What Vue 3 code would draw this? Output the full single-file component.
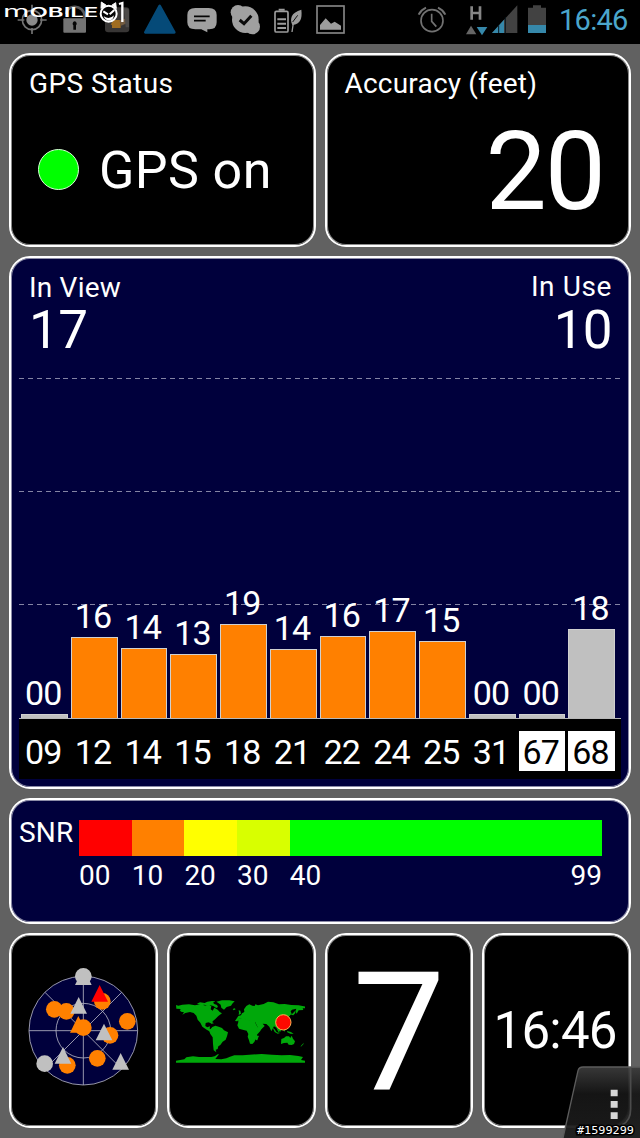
<template>
  <div class="screen">
    <!-- status bar -->
    <header class="status-bar">
      <svg class="notify" width="360" height="44" viewBox="0 0 1080 132">
        <!-- gps -->
        <g stroke="#747474" fill="none" stroke-width="5">
          <circle cx="96" cy="60" r="29" />
          <path d="M96 14v22M96 84v18M53 60h20M120 60h20" />
        </g>
        <circle cx="96" cy="60" r="17" fill="#8a8a8a" />
        <!-- unlocked -->
        <path d="M199 42c0-30 52-30 55 6v9" fill="none" stroke="#5b5b5b" stroke-width="8" />
        <rect x="190" y="55" width="68" height="43" rx="3" fill="#747474" />
        <path d="M224 64a7 7 0 0 1 4 12v13h-8V76a7 7 0 0 1 4-12z" fill="#050505" />
        <!-- app thumbnail -->
        <rect x="315" y="22" width="73" height="75" rx="10" fill="#383635" />
        <path d="M340 60h22v24h-26v-10h-4z" fill="#a06d20" />
        <path d="M358 62l22-8v16l-16 7z" fill="#725b40" />
        <path d="M372 25h10q5 2 5 9v48h-10z" fill="#4d4b49" />
        <!-- triangle -->
        <path d="M479 18L436 97H523Z" fill="#054a78" stroke="#054a78" stroke-width="8" stroke-linejoin="round" />
        <!-- message -->
        <path d="M586 24h40q24 0 24 21v22q0 21-22 21h-6v9l-18-9h-18q-24 0-24-21V45q0-21 24-21z" fill="#a0a0a0" />
        <path d="M582 49h47M582 62h35" stroke="#050505" stroke-width="5" />
        <!-- skype -->
        <circle cx="736" cy="59" r="40" fill="#a0a0a0" />
        <circle cx="714" cy="37" r="22" fill="#a0a0a0" />
        <circle cx="757" cy="80" r="23" fill="#a0a0a0" />
        <path d="M719 60l13 11 22-24" fill="none" stroke="#0a0a0a" stroke-width="9" />
        <!-- battery saver -->
        <rect x="825" y="34" width="39" height="62" rx="4" fill="none" stroke="#9c9c9c" stroke-width="5" />
        <path d="M836 29h18M832 58h26M832 71h26M832 84h26" stroke="#9c9c9c" stroke-width="6" />
        <path d="M904 29c-30 8-36 27-27 46 25-3 30-20 27-46z" fill="#9c9c9c" />
        <path d="M895 43l-14 20-5 33" fill="none" stroke="#9c9c9c" stroke-width="4" />
        <path d="M893 46l-15 20" stroke="#111" stroke-width="3" />
        <!-- picture -->
        <rect x="951" y="18" width="81" height="81" fill="none" stroke="#858585" stroke-width="5" />
        <path d="M960 89V75l17-20 16 16 11-6 19 12v12z" fill="#9c9c9c" />
        <!-- site logo -->
        <text x="9" y="51" textLength="286" lengthAdjust="spacingAndGlyphs" class="logo"><tspan font-size="48" font-weight="400">m</tspan><tspan font-size="38">OBILE</tspan></text>
        <circle cx="326" cy="41" r="24" fill="#050505" stroke="#fff" stroke-width="6" />
        <path d="M303 26L304 6l15 10M335 16l12-8 2 18" fill="#fff" stroke="#fff" stroke-width="3" />
        <path d="M310 34l14 9M343 30l-14 13" stroke="#fff" stroke-width="6" />
        <path d="M311 49q17 12 31-3q-3 16-15 16q-12-1-16-13z" fill="#fff" />
        <path d="M357 12l10-3v57" fill="none" stroke="#fff" stroke-width="7" />
      </svg>
      <svg class="system" width="146" height="44" viewBox="0 0 438 132">
        <!-- alarm -->
        <g fill="none" stroke="#727272" stroke-width="5">
          <circle cx="96" cy="62" r="33" />
          <path d="M95 41v23l14 16" />
          <path d="M56 44q7-14 22-21M114 23q15 7 22 21" stroke-width="6" />
        </g>
        <!-- network -->
        <path d="M215 19v40M240 19v40M215 39h25" stroke="#858585" stroke-width="8" />
        <path d="M213 77l16 26h-31z" fill="#656565" />
        <path d="M230 81h32l-16 25z" fill="#3688aa" />
        <path d="M352 16v83h-76z" fill="#424242" />
        <path d="M312 59v40h-36z" fill="#3688aa" />
        <path d="M296 76v23M316 52v48" stroke="#081820" stroke-width="3" />
        <!-- battery -->
        <path d="M384 23h15v-7h24v7h15v76h-54z" fill="#424242" />
        <path d="M384 75h54v24h-54z" fill="#3688aa" />
      </svg>
      <span class="clock">16:46</span>
    </header>

    <main class="board">
      <section class="card gps">
        <h2>GPS Status</h2>
        <div class="gps-state"><i class="led"></i><span>GPS on</span></div>
      </section>

      <section class="card accuracy">
        <h2>Accuracy (feet)</h2>
        <div class="feet">20</div>
      </section>

      <section class="card navy chart">
        <div class="counts">
          <div><h2>In View</h2><b>17</b></div>
          <div class="in-use"><h2>In Use</h2><b>10</b></div>
        </div>
        <div class="plot">
          <div class="grid-lines"><i></i><i></i><i></i></div>
          <div class="bars">
            <div v-for="s in satellites" :key="s.id" class="bar-col">
              <span>{{ s.snr }}</span>
              <i class="bar" :class="{ used: s.used }" :style="{ height: s.h + 'px' }"></i>
            </div>
          </div>
        </div>
        <div class="axis">
          <span v-for="s in satellites" :key="s.id" :class="{ glonass: Number(s.id) > 64 }">{{ s.id }}</span>
        </div>
      </section>

      <section class="card navy snr">
        <span class="snr-label">SNR</span>
        <div class="scale">
          <div v-for="r in ranges" :key="r.label" class="range" :class="r.name">
            <i></i>
            <span>{{ r.label }}</span>
            <span v-if="r.end" class="end">{{ r.end }}</span>
          </div>
        </div>
      </section>

      <section class="card mini">
        <svg width="112.67" height="127.33" viewBox="50 110 338 382">
          <circle cx="219" cy="301" r="163" fill="#00003c" />
          <g fill="none" stroke="#b4b4c4" stroke-width="2.5">
            <circle cx="219" cy="301" r="163" />
            <circle cx="219" cy="301" r="82" />
            <path d="M56 301h326M219 138v326M104 186l230 230M334 186L104 416" />
          </g>
          <circle v-for="(d, i) in dots" :key="i" :cx="d[0]" :cy="d[1]" r="25" :fill="d[2]" />
          <path v-for="(t, i) in triangles" :key="'t' + i" :d="`M${t[0]} ${t[1]}l25 50h-50z`" :fill="t[2]" />
          <circle cx="219" cy="292" r="25" fill="#ff8000" />
        </svg>
      </section>

      <section class="card mini world">
        <svg width="129" height="63.33" viewBox="33 60 387 190" fill="#00a80a">
          <!-- americas -->
          <path d="M33 75l7 2 12-3 20-1 18 3 16-3 17 4 9-3 7 5-2 9 6 4 5-9 10 6 6 7 7 4-11 8-9 9-8 7-2 7-7-5-12 3-1 9 6 4 8-3-1 7 7 3 3 7 9 3-3 2-13-5-12-7-13-9-6-12-8-9-4-12-8-8-11-3-14 3-9 5 5-7-9-2-4-5 4-3-14-1z" />
          <path d="M96 71l9-4 14 2 8-4 14-2 10 1-7 4 4 4 8 3 3 6-5 3-9-6-9-2-10 2-8-4-9 2z" />
          <path d="M154 65l17-4 22 0 16 3-6 6-5 7-13 4-8 8-8-6-2-9-7-5z" />
          <path d="M142 141l9-4 10 3 10 4 6 7 12 6-3 12-4 10-9 6-7 10-6 4-2 8-6 2 2 8-8-6-2-19-1-20-7-10-3-8 3-6z" />
          <path d="M127 124l12 1 8 5-7 1-9-4z" />
          <!-- europe and asia -->
          <path d="M203 87l6-2 3 3-6 3zM221 91l5 1 2 9-7 4 1-7z" />
          <path d="M220 108l8-2 3-6 7-4-1-8 7-10 9-5 9 4 7 1 2-5 8 3 17-4 13-7 16 2 17 6 17-1 20 3 22 1 26 5-1 4-13 0 2 5-14 1-6 10-4-7 3-8-13 3-4 5 3 7-7 8-7 6 1 9-6-5-6 1 4 8-4 7-9 6 2 9-7-3 2 12-4-5-5-11-7-4-8 15-6-14-9-8-11-1 6 7-10 10-6 3-8-15-4-9-12-3-7-2-4 3-10-9 4 9-10-10-9 1-6 8-7-1z" />
          <!-- africa -->
          <path d="M219 116l12-2 7-2 3 5 10 4 11-2 7 4 5 12 6 9 11-1-5 10-10 11 1 10-6 5-3 7-6 6-7-1-3-10-4-11 2-8-5-10-12-3-11-3-5-10 3-10z" />
          <path d="M279 166l2 3-4 12-5-1 2-10z" />
          <!-- pacific -->
          <path d="M323 143l6 5 6 9 10 2-7 2-9-5zM340 148l7-5 3 5-4 7-5-2zM355 150l6 0-3 5zM366 153l12 3 8 6-10-1-9-4zM377 104l5-3 8-8 1 6-6 7z" />
          <path d="M349 177l8-3 6-5 9 0 4 5 4-7 4 9 6 8-3 8-7 3-9-1-4-6-10 1-9 3z" />
          <path d="M408 197l5-5 3-4-1 5-8 8z" />
          <!-- antarctica -->
          <path d="M33 242L58 238 64 232 84 229 102 231 139 231 149 229 158 223 162 223 156 230 151 237 169 238 184 235 195 230 208 226 233 226 253 224 290 222 321 224 350 226 375 225 400 228 414 231 408 240 420 242V248H33Z" />
          <circle cx="355" cy="127" r="23" fill="#fe0800" stroke="#ffb052" stroke-width="3" />
        </svg>
      </section>

      <section class="card mini seven"><span>7</span></section>
      <section class="card mini time"><span>16:46</span></section>
    </main>

    <!-- overflow menu tab -->
    <svg class="menu-tab" width="80" height="74" viewBox="0 0 240 222">
      <defs>
        <linearGradient id="tab" x1="0" y1="0" x2="0" y2="1">
          <stop offset="0" stop-color="#3b3b3b" />
          <stop offset=".38" stop-color="#161616" />
          <stop offset="1" stop-color="#1c1c1c" />
        </linearGradient>
      </defs>
      <path d="M9 222L54 20Q57 9 69 9H244V222" fill="url(#tab)" fill-opacity=".94" stroke="#5c5c5c" stroke-width="4" />
      <path d="M212 10V135q0 35-25 47" fill="none" stroke="#4b4b4b" stroke-width="5" />
      <path d="M152 77h21v20h-21zM152 111h21v20h-21zM152 145h21v20h-21z" fill="#d6d6d6" />
      <text x="51" y="210" font-size="33" textLength="171" lengthAdjust="spacingAndGlyphs" class="stamp">#1599299</text>
    </svg>
  </div>
</template>

<script setup>
const satellites = [
  { id: '09', snr: '00', h: 4 },
  { id: '12', snr: '16', h: 81, used: true },
  { id: '14', snr: '14', h: 70, used: true },
  { id: '15', snr: '13', h: 64, used: true },
  { id: '18', snr: '19', h: 94, used: true },
  { id: '21', snr: '14', h: 69, used: true },
  { id: '22', snr: '16', h: 82, used: true },
  { id: '24', snr: '17', h: 87, used: true },
  { id: '25', snr: '15', h: 77, used: true },
  { id: '31', snr: '00', h: 4 },
  { id: '67', snr: '00', h: 4 },
  { id: '68', snr: '18', h: 89 }
]

const ranges = [
  { name: 'red', label: '00' },
  { name: 'orange', label: '10' },
  { name: 'yellow', label: '20' },
  { name: 'lime', label: '30' },
  { name: 'green', label: '40', end: '99' }
]

const orange = '#ff8000'
const grey = '#c0c0c0'

const dots = [
  [219, 138, grey],
  [132, 237, orange],
  [168, 243, orange],
  [276, 213, orange],
  [351, 273, orange],
  [299, 315, orange],
  [261, 384, orange],
  [171, 405, orange],
  [103, 400, grey]
]

const triangles = [
  [219, 114, grey],
  [268, 164, '#ff0000'],
  [205, 200, grey],
  [204, 257, orange],
  [281, 280, grey],
  [158, 350, grey],
  [331, 368, grey]
]
</script>

<style>
html, body { margin: 0; background: #616161; }
</style>

<style scoped>
* { box-sizing: border-box; }

.screen {
  position: relative;
  width: 640px;
  height: 1138px;
  overflow: hidden;
  background: #616161;
  color: #fff;
  font-family: Roboto, "Noto Sans", sans-serif;
}

/* === status bar === */
.status-bar { display: flex; height: 44px; background: #000; }
.notify { margin-right: 40px; flex: none; }
.system { flex: none; }
.clock { width: 81px; margin-left: 13px; color: #4ba6cc; font-size: 29px; line-height: 41px; letter-spacing: -0.7px; white-space: nowrap; }
.logo { fill: #fff; font-family: Inter, sans-serif; font-weight: 600; }

/* === cards === */
.board {
  display: grid;
  grid-template-columns: repeat(4, 1fr);
  grid-template-rows: 194px 533px 126px 195px;
  gap: 9px;
  padding: 9px 9px 0 9px;
}
.card {
  border: 2px solid #fff;
  border-radius: 21px;
  background: #000;
  box-shadow: inset 0 0 0 1px rgba(255, 255, 255, 0.55);
  min-width: 0;
  overflow: hidden;
}
.navy { background: #00003c; grid-column: span 4; }
h2 { margin: 0; font-size: 28px; font-weight: 400; line-height: 34px; white-space: nowrap; }

.gps, .accuracy { grid-column: span 2; padding: 12px 18px 0; }
.gps h2 { letter-spacing: 0.4px; }
.accuracy h2 { letter-spacing: 0.2px; }
.gps-state { display: flex; align-items: center; margin: 38px 0 0 9px; font-size: 52px; line-height: 64px; letter-spacing: 0.4px; }
.gps-state span { margin-left: 20px; }
.led { width: 41px; height: 41px; border: 1.5px solid #d6ffd6; border-radius: 50%; background: #0f0; margin-top: -4px; }
.feet { font-size: 109px; line-height: 110px; text-align: right; padding-right: 7px; margin-top: 16px; letter-spacing: -2px; }

/* === chart === */
.chart { display: flex; flex-direction: column; padding: 13px 8px 0; }
.counts { display: flex; justify-content: space-between; height: 107px; padding: 0 9px 0 10px; }
.counts b { display: block; font-size: 53px; font-weight: 400; line-height: 50px; letter-spacing: -0.6px; }
.counts h2 { letter-spacing: 0.2px; }
.in-use { text-align: right; }
.in-use h2 { letter-spacing: 0.6px; line-height: 32px; }
.in-use b { line-height: 54px; }
.plot { position: relative; height: 341px; border-bottom: 1px solid #b8b8b8; }
.grid-lines { position: absolute; inset: 0; }
.grid-lines i {
  display: block;
  height: 1px;
  margin-bottom: 112px;
  background: repeating-linear-gradient(90deg, #8484a4 0 5px, transparent 5px 8.9px);
}
.bars { position: relative; display: flex; align-items: flex-end; gap: 3px; height: 340px; padding: 0 6px 0 2px; }
.bar-col { flex: 1; display: flex; flex-direction: column; align-items: center; min-width: 0; }
.bar-col span { font-size: 34px; line-height: 40px; margin-bottom: 1px; letter-spacing: -0.8px; padding-right: 2px; }
.bar { width: 100%; background: #c0c0c0; border: 1px solid #d0d0d0; border-bottom: 0; }
.bar.used { background: #ff8000; }
.axis { display: flex; gap: 3px; height: 60px; padding: 12px 6px 8px 2px; background: #000; font-size: 34px; line-height: 42px; text-align: center; letter-spacing: -0.8px; }
.axis span { flex: 1; min-width: 0; padding-right: 2px; }
.axis .glonass { background: #fff; color: #000; }

/* === snr legend === */
.snr { display: flex; padding: 20px 27px 0 8px; font-size: 28px; }
.snr-label { width: 60px; line-height: 25px; letter-spacing: 0.2px; }
.scale { display: flex; flex: 1; }
.range { width: 52.7px; display: flex; flex-wrap: wrap; justify-content: space-between; align-content: flex-start; }
.range i { width: 100%; height: 36px; }
.range span { line-height: 40px; }
.red i { background: #f00; }
.orange i { background: #ff8000; }
.yellow i { background: #ff0; }
.lime i { background: #d8ff00; }
.green { flex: 1; }
.green i { background: #0f0; }

/* === bottom row === */
.mini { display: flex; align-items: center; justify-content: center; }
.world { padding: 2px 2px 0 0; }
.seven { font-size: 166px; line-height: 1; padding-top: 5px; }
.time { font-size: 51px; letter-spacing: -0.8px; padding-right: 3px; }

.menu-tab { position: absolute; right: 0; bottom: 0; }
.stamp { fill: #fff; stroke: #000; stroke-width: 9px; paint-order: stroke; font-family: "DejaVu Sans Mono", monospace; }
</style>
